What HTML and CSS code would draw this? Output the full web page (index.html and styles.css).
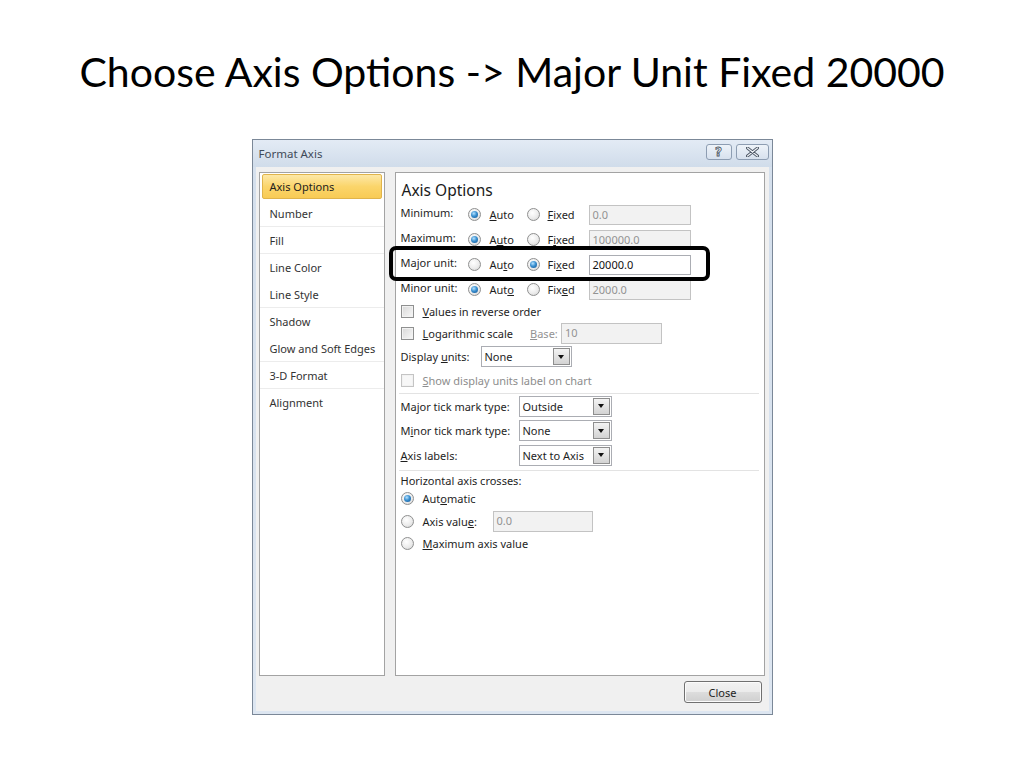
FILE: index.html
```html
<!DOCTYPE html>
<html lang="en">
<head>
<meta charset="UTF-8">
<title>Format Axis</title>
<link rel="stylesheet" href="styles.css">
</head>
<body>

<h1 class="slide-title">Choose Axis Options -&gt; Major Unit Fixed 20000</h1>

<div class="dialog">
    <div class="titlebar">
        <span class="title">Format Axis</span>
        <div class="tb-buttons">
            <span class="tb-btn help">?</span>
            <span class="tb-btn close">
                <svg width="13" height="10" viewBox="0 0 13 10">
                    <path d="M1.5 1 L11.5 9 M11.5 1 L1.5 9" stroke="#4b5563" stroke-width="3" stroke-linecap="round"/>
                    <path d="M1.5 1 L11.5 9 M11.5 1 L1.5 9" stroke="#eef2f7" stroke-width="1.2" stroke-linecap="round"/>
                </svg>
            </span>
        </div>
    </div>

    <div class="client">
        <div class="panes">
            <ul class="nav">
                <li class="active">Axis Options</li>
                <li class="sep">Number</li>
                <li class="sep">Fill</li>
                <li>Line Color</li>
                <li class="sep">Line Style</li>
                <li>Shadow</li>
                <li class="sep">Glow and Soft Edges</li>
                <li class="sep">3-D Format</li>
                <li>Alignment</li>
            </ul>

            <div class="options">
                <div class="heading">Axis Options</div>

                <div class="row bound">
                    <span class="lbl">Minimum:</span>
                    <span class="radio on"></span><span class="opt"><u>A</u>uto</span>
                    <span class="radio"></span><span class="opt"><u>F</u>ixed</span>
                    <span class="field off">0.0</span>
                </div>
                <div class="row bound">
                    <span class="lbl">Maximum:</span>
                    <span class="radio on"></span><span class="opt">A<u>u</u>to</span>
                    <span class="radio"></span><span class="opt">F<u>i</u>xed</span>
                    <span class="field off">100000.0</span>
                </div>
                <div class="row bound">
                    <span class="lbl">Major unit:</span>
                    <span class="radio"></span><span class="opt">Au<u>t</u>o</span>
                    <span class="radio on"></span><span class="opt">Fi<u>x</u>ed</span>
                    <span class="field">20000.0</span>
                </div>
                <div class="row bound">
                    <span class="lbl">Minor unit:</span>
                    <span class="radio on"></span><span class="opt">Aut<u>o</u></span>
                    <span class="radio"></span><span class="opt">Fix<u>e</u>d</span>
                    <span class="field off">2000.0</span>
                </div>

                <div class="row check-row first">
                    <span class="check"></span><span class="opt"><u>V</u>alues in reverse order</span>
                </div>
                <div class="row check-row">
                    <span class="check"></span><span class="opt"><u>L</u>ogarithmic scale</span>
                    <span class="base-lbl"><u>B</u>ase:</span>
                    <span class="field off base">10</span>
                </div>
                <div class="row units">
                    <span class="lbl units-lbl">Display <u>u</u>nits:</span>
                    <span class="combo units-combo"><span class="combo-text">None</span><span class="combo-btn"><i class="arrow"></i></span></span>
                </div>
                <div class="row check-row">
                    <span class="check dim"></span><span class="opt dim-text"><u>S</u>how display units label on chart</span>
                </div>

                <div class="rule"></div>

                <div class="row tick">
                    <span class="lbl tick-lbl">Ma<u>j</u>or tick mark type:</span>
                    <span class="combo tick-combo"><span class="combo-text">Outside</span><span class="combo-btn"><i class="arrow"></i></span></span>
                </div>
                <div class="row tick">
                    <span class="lbl tick-lbl">M<u>i</u>nor tick mark type:</span>
                    <span class="combo tick-combo"><span class="combo-text">None</span><span class="combo-btn"><i class="arrow"></i></span></span>
                </div>
                <div class="row tick">
                    <span class="lbl tick-lbl"><u>A</u>xis labels:</span>
                    <span class="combo tick-combo"><span class="combo-text">Next to Axis</span><span class="combo-btn"><i class="arrow"></i></span></span>
                </div>

                <div class="rule"></div>

                <div class="row cross-title">Horizontal axis crosses:</div>
                <div class="row cross">
                    <span class="radio on"></span><span class="opt">Aut<u>o</u>matic</span>
                </div>
                <div class="row cross value">
                    <span class="radio"></span><span class="opt value-lbl">Axis valu<u>e</u>:</span>
                    <span class="field off value-field">0.0</span>
                </div>
                <div class="row cross">
                    <span class="radio"></span><span class="opt"><u>M</u>aximum axis value</span>
                </div>
            </div>
        </div>

        <div class="footer">
            <button class="btn">Close</button>
        </div>
    </div>

    <div class="callout"></div>
</div>

</body>
</html>
```

FILE: styles.css
```css
body {
    margin: 0;
    padding: 0;
    background-color: #ffffff;
    font-family: "Noto Sans", "Open Sans", sans-serif;
}

.slide-title {
    margin: 0;
    padding-top: 46px;
    height: 52px;
    line-height: 52px;
    text-align: center;
    font-family: Lato, "Open Sans", sans-serif;
    font-weight: normal;
    font-size: 41px;
    color: #000;
}

.dialog {
    position: relative;
    width: 521px;
    margin: 41px auto 0;
    box-sizing: border-box;
    border: 1px solid #7b8898;
    background: linear-gradient(#dbe5f1, #d4dfec 40px, #dde6f1);
    font-size: 11px;
    color: #1e1e1e;
}

.titlebar {
    height: 27px;
    display: flex;
    align-items: center;
    justify-content: space-between;
    padding: 0 3px 0 6px;
    background: linear-gradient(#e3ebf5, #d0dcea);
}

.title {
    color: #3f4a58;
    font-size: 11.5px;
}

.tb-buttons {
    display: flex;
    gap: 4px;
    margin-top: -3px;
}

.tb-btn {
    height: 16px;
    box-sizing: border-box;
    border: 1px solid #8d9db2;
    border-radius: 3px;
    background: linear-gradient(#eef3f9, #d7e1ee);
    display: flex;
    align-items: center;
    justify-content: center;
}

.tb-btn.help {
    width: 26px;
    font-family: "DejaVu Sans", sans-serif;
    font-size: 12px;
    font-weight: bold;
    color: #eef2f7;
    -webkit-text-stroke: 0.8px #4b5563;
    line-height: 14px;
}

.tb-btn.close {
    width: 33px;
}

.client {
    margin: 0 3px 3px;
    background: #f0f0f0;
    padding: 5px 4px 8px 3px;
}

.panes {
    display: flex;
    gap: 10px;
    height: 504px;
}

.nav {
    list-style: none;
    margin: 0;
    padding: 0;
    width: 126px;
    box-sizing: border-box;
    border: 1px solid #a3a3a3;
    background: #fff;
    color: #333;
}

.nav li {
    height: 27px;
    line-height: 27px;
    padding-left: 10px;
    box-sizing: border-box;
}

.nav li.sep {
    border-bottom: 1px solid #ececec;
}

.nav li.active {
    height: 25px;
    line-height: 24px;
    margin: 1px 2px;
    padding-left: 7px;
    border: 1px solid #e0b44b;
    border-radius: 2px;
    background: linear-gradient(#fde8a7, #fbd56b 50%, #f8cb55);
    color: #222;
}

.options {
    width: 370px;
    box-sizing: border-box;
    border: 1px solid #a3a3a3;
    background: #fff;
    padding: 6px 7px 0 5px;
}

.heading {
    font-size: 15.5px;
    line-height: 22px;
    margin-bottom: 1px;
    padding-left: 1px;
    color: #1a1a1a;
}

.row {
    display: flex;
    align-items: center;
}

.row.bound {
    height: 25px;
}

.lbl {
    width: 67px;
    flex-shrink: 0;
}

.bound .lbl {
    margin-top: -5px;
}

.opt {
    margin-left: 9px;
}

.bound .opt:nth-of-type(3) {
    width: 28px;
    margin-right: 9px;
}

.bound .opt:nth-of-type(5) {
    width: 32px;
    margin-left: 8px;
    margin-right: 9px;
}

.radio {
    width: 13px;
    height: 13px;
    flex-shrink: 0;
    box-sizing: border-box;
    border: 1px solid #8f9090;
    border-radius: 50%;
    background: radial-gradient(circle at 40% 35%, #ffffff 0, #ececec 55%, #cfcfcf 100%);
    position: relative;
}

.radio.on::after {
    content: "";
    position: absolute;
    left: 2px;
    top: 2px;
    width: 7px;
    height: 7px;
    border-radius: 50%;
    background: radial-gradient(circle at 40% 35%, #b6e2ff 0, #3a90d0 45%, #0e4f8f 100%);
}

.check {
    width: 13px;
    height: 13px;
    flex-shrink: 0;
    box-sizing: border-box;
    border: 1px solid #8f9090;
    background: linear-gradient(135deg, #d8d8d8, #f8f8f8);
    box-shadow: inset 0 0 0 1px #f2f2f2;
}

.check.dim {
    border-color: #c4c4c4;
    background: #f7f7f7;
}

.dim-text {
    color: #8d8d8d;
}

.field {
    height: 20px;
    width: 102px;
    box-sizing: border-box;
    border: 1px solid #abadb3;
    background: #fff;
    padding-left: 3px;
    line-height: 18px;
    color: #111;
}

.field.off {
    background: #f2f2f2;
    border-color: #c3c3c3;
    color: #939393;
}

.check-row {
    height: 22px;
}

.check-row.first {
    margin-top: -2px;
}

.base-lbl {
    margin-left: 17px;
    width: 31px;
    color: #939393;
}

.field.base {
    width: 101px;
    height: 21px;
}

.row.units {
    height: 25px;
}

.units-lbl {
    width: 80px;
}

.combo {
    display: flex;
    height: 21px;
    box-sizing: border-box;
    border: 1px solid #abadb3;
    background: #fff;
}

.combo-text {
    flex: 1;
    padding-left: 3px;
    line-height: 19px;
    white-space: nowrap;
    overflow: hidden;
}

.combo-btn {
    width: 17px;
    margin: 1px;
    box-sizing: border-box;
    border: 1px solid #8e8e8e;
    background: linear-gradient(#f3f3f3, #d3d3d3);
    display: flex;
    align-items: center;
    justify-content: center;
}

.arrow {
    width: 0;
    height: 0;
    border-left: 3.5px solid transparent;
    border-right: 3.5px solid transparent;
    border-top: 4px solid #111;
}

.units-combo {
    width: 91px;
}

.rule {
    height: 1px;
    background: #e3e3e3;
    margin: 2px -2px 0 -2px;
}

.row.tick {
    height: 24.5px;
}

.tick-lbl {
    width: 118px;
}

.tick-combo {
    width: 93px;
}

.row.cross-title {
    height: 19px;
}

.row.cross {
    height: 18px;
}

.row.cross.value {
    height: 27px;
}

.value-lbl {
    width: 70px;
}

.value-field {
    width: 100px;
    height: 21px;
}

.footer {
    display: flex;
    justify-content: flex-end;
    padding: 5px 3px 0 0;
}

.btn {
    width: 78px;
    height: 22px;
    font-family: "Noto Sans", "Open Sans", sans-serif;
    font-size: 11px;
    color: #1e1e1e;
    border: 1px solid #707070;
    border-radius: 3px;
    background: linear-gradient(#f2f2f2, #ebebeb 50%, #dddddd 51%, #cfcfcf);
    box-shadow: inset 0 0 0 1px #fbfbfb;
    padding: 0;
}

/* black highlight drawn over the Major unit row */
.callout {
    position: absolute;
    left: 136px;
    top: 106px;
    width: 321px;
    height: 35px;
    box-sizing: border-box;
    border: 4px solid #000;
    border-radius: 7px;
}
```
